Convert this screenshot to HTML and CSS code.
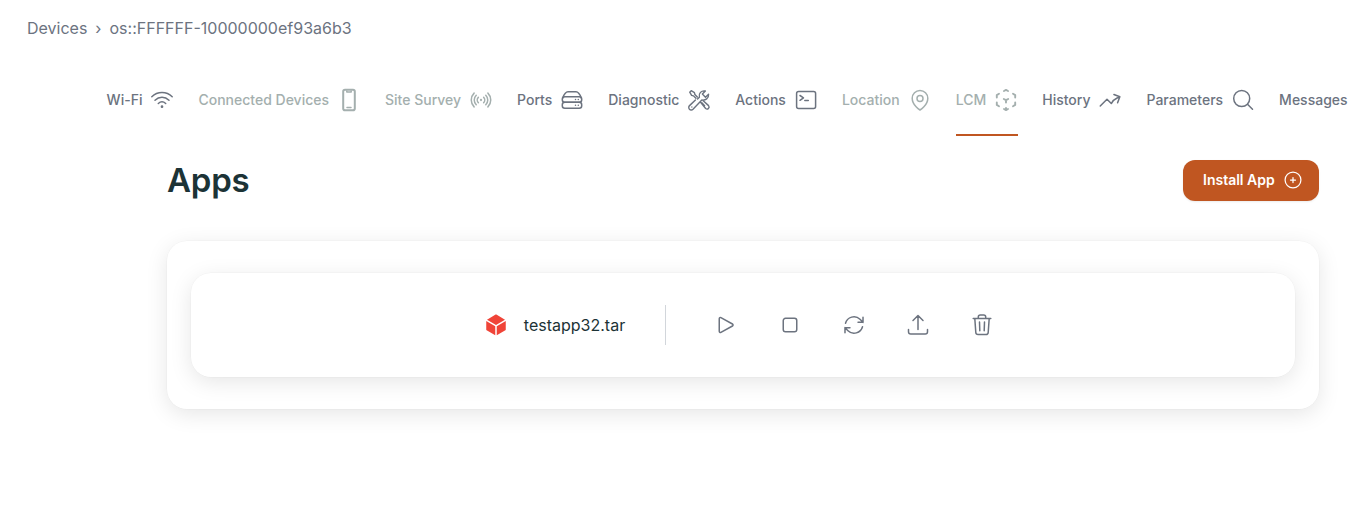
FILE: index.html
```html
<!DOCTYPE html>
<html lang="en">
<head>
<meta charset="utf-8">
<title>Apps</title>
<link rel="stylesheet" href="styles.css">
</head>
<body>
<nav class="breadcrumbs"><span>Devices</span><span class="separator">›</span><span>os::FFFFFF-10000000ef93a6b3</span></nav>
<nav class="tabs">
  <a class="tab">Wi-Fi<svg class="icon" viewBox="0 0 24 24"><path d="M1.8 8.8C7.5 3.2 16.500 3.200 22.200 8.800M5 12.200c4-3.800 10-3.800 14 0M8.300 15.500c2.200-2 5.200-2 7.400 0"/><circle cx="12" cy="18.700" r=".6" class="solid"/></svg></a>
  <a class="tab disabled">Connected Devices<svg class="icon" viewBox="0 0 24 24"><rect x="6.200" y="1.800" width="11.600" height="20.400" rx="1.800" stroke-width="2"/><path d="M9.800 3v1h4.400V3M10 19.500h4"/></svg></a>
  <a class="tab disabled">Site Survey<svg class="icon" viewBox="0 0 24 24"><path d="M9.348 14.651a3.750 3.750 0 0 1 0-5.303m5.304 0a3.750 3.750 0 0 1 0 5.303m-7.425 2.122a6.750 6.750 0 0 1 0-9.546m9.546 0a6.750 6.750 0 0 1 0 9.546M5.106 18.894c-3.808-3.808-3.808-9.980 0-13.789m13.788 0c3.808 3.808 3.808 9.981 0 13.790"/><circle cx="12" cy="12" r=".4" class="solid"/></svg></a>
  <a class="tab">Ports<svg class="icon" viewBox="0 0 24 24"><rect x="2.300" y="8.700" width="19.400" height="5.500" rx="2.500"/><rect x="2.300" y="14.200" width="19.400" height="6.100" rx="2.500"/><path d="M2.800 9.800C4 6.500 5 3.700 8 3.700h8c3 0 4 2.800 5.200 6.100M15.500 11.500h.01M18.300 11.500h.01M15.500 17.300h.01M18.300 17.300h.01"/></svg></a>
  <a class="tab">Diagnostic<svg class="icon" viewBox="-.8 -.8 25.600 25.600"><path d="m10.200 8.700-2.600-2.600-.5-2-3.400-2-1.600 1.600 2 3.400 2 .5 2.600 2.600M13.700 14.500l5.400 6.600a2.200 2.200 0 0 0 3.100-3.100l-5.700-5.200M8.200 11.900 1.900 18a2.400 2.400 0 0 0 3.700 3.900L15 12c3.800.7 7.500-1.800 7.200-6.200l-3.300 3.200-3.300-3.300 3.200-3.300c-4.300-.8-7.500 2.500-6.400 6.600l-2 2M15 15l3 3M4.400 19.500h.01"/></svg></a>
  <a class="tab">Actions<svg class="icon" viewBox="0 0 24 24"><rect x="2.600" y="3.500" width="19" height="17" rx="2"/><path d="m6 7.500 3.500 2.300L6 12.300M10.800 12.500h3.500"/></svg></a>
  <a class="tab disabled">Location<svg class="icon" viewBox="0 0 24 24"><path d="M15 10.500a3 3 0 1 1-6 0 3 3 0 0 1 6 0Z"/><path d="M19.800 10.200c0 7.200-7.800 11.800-7.800 11.800s-7.800-4.600-7.800-11.800a7.800 7.800 0 0 1 15.600 0Z"/></svg></a>
  <a class="tab disabled active">LCM<svg class="icon bold" viewBox="0 0 24 24"><path d="m10 3 2-1.100L14 3M19 5.800l2.200 1.300v2.400M5 5.800 2.800 7.100v2.400M9.800 11l2.200 1.200 2.200-1.200M12 12.200v2.300M2.800 14.500v2.400L5 18.200M21.200 14.500v2.400L19 18.200M10 21l2 1.100 2-1.100M12 20v2"/></svg></a>
  <a class="tab">History<svg class="icon" viewBox="0 0 24 24"><path d="M2.250 18 9 11.250l4.306 4.306a11.950 11.950 0 0 1 5.814-5.518l2.740-1.220m0 0-5.940-2.281m5.940 2.280-2.280 5.941"/></svg></a>
  <a class="tab">Parameters<svg class="icon" viewBox="0 0 24 24"><circle cx="10.700" cy="10.500" r="8"/><path d="m16.500 16.200 5 5"/></svg></a>
  <a class="tab">Messages</a>
</nav>
<main class="content">
  <header class="heading">
    <h1>Apps</h1>
    <button class="install">Install App<svg class="plus" viewBox="0 0 24 24"><path d="M12 9v6m3-3H9m12.500 0a9.500 9.500 0 1 1-19 0 9.500 9.500 0 0 1 19 0Z"/></svg></button>
  </header>
  <section class="panel">
    <article class="app">
      <svg class="cube" viewBox="0 0 24 24"><path d="M12.378 1.602a.75.75 0 0 0-.756 0L3 6.632l9 5.250 9-5.250-8.622-5.030ZM21.750 7.930l-9 5.250v9l8.628-5.032a.75.75 0 0 0 .372-.648V7.930ZM11.250 22.180v-9l-9-5.250v8.570a.75.75 0 0 0 .372.648l8.628 5.033Z"/></svg>
      <span class="name">testapp32.tar</span>
      <div class="actions">
        <svg class="icon" viewBox="0 0 24 24"><path d="M5.250 5.653c0-.856.917-1.398 1.667-.986l11.540 6.347a1.125 1.125 0 0 1 0 1.972l-11.540 6.347a1.125 1.125 0 0 1-1.667-.986V5.653Z"/></svg>
        <svg class="icon" viewBox="0 0 24 24"><path d="M5.250 7.500A2.250 2.250 0 0 1 7.500 5.250h9a2.250 2.250 0 0 1 2.250 2.250v9a2.250 2.250 0 0 1-2.250 2.250h-9a2.250 2.250 0 0 1-2.250-2.250v-9Z"/></svg>
        <svg class="icon" viewBox="0 0 24 24"><path d="M16.023 9.348h4.992V4.356M2.985 19.644v-4.992h4.992M3.500 10.300A8.700 8.700 0 0 1 18 6.300l3 3.048M20.500 13.700A8.700 8.700 0 0 1 6 17.700l-3-3.048"/></svg>
        <svg class="icon" viewBox="0 0 24 24"><path d="M2.500 16.500v2.250A2.250 2.250 0 0 0 4.750 21h14.500a2.250 2.250 0 0 0 2.250-2.250V16.500M7 7.500l5-5 5 5M12 2.500v14"/></svg>
        <svg class="icon" viewBox="0 0 24 24"><path d="M3.200 5.500h17.600M4.800 5.500l1 14a2.250 2.250 0 0 0 2.250 2.100h7.900a2.250 2.250 0 0 0 2.250-2.100l1-14M8.300 5.500V4a2 2 0 0 1 2-2h3.400a2 2 0 0 1 2 2v1.500M9.500 9l.3 8.700M14.500 9l-.3 8.700"/></svg>
      </div>
    </article>
  </section>
</main>
</body>
</html>
```
FILE: styles.css
```css
* { box-sizing: border-box; }
body { margin: 0; min-height: 100vh; background: #fff; color: #6c737f; font-family: Inter, "Liberation Sans", sans-serif; }
.breadcrumbs { display: flex; gap: 8px; padding: 16px 27px 0; height: 64px; font-size: 16px; line-height: 24px; }
.tabs { display: flex; gap: 24px; height: 72px; padding-left: 106.6px; overflow: hidden; font-size: 14px; font-weight: 500; line-height: 24px; white-space: nowrap; }
.tab { display: flex; flex: none; align-items: center; gap: 8px; }
.disabled { color: #a4afae; }
.active { border-bottom: 2px solid #c05621; padding-top: 2px; }
.icon { width: 24px; height: 24px; flex: none; fill: none; stroke: currentColor; stroke-width: 1.5; stroke-linecap: round; stroke-linejoin: round; }
.bold { stroke-width: 1.9; }
.solid { fill: currentColor; }
.content { padding: 24px 36px 0 167px; }
.heading { display: flex; justify-content: space-between; align-items: flex-start; height: 81px; }
h1 { margin: 0; color: #1c3336; font-size: 33px; font-weight: 600; line-height: 41px; letter-spacing: -.2px; }
.install { display: flex; align-items: center; gap: 8px; width: 136px; height: 41px; padding: 0 16px 1px 20px; border: 0; border-radius: 12px; background: #c05621; color: #fff; font: 600 14px/24px Inter, sans-serif; white-space: nowrap; box-shadow: 0 1px 2px rgba(0,0,0,.08); }
.plus { width: 20px; height: 20px; flex: none; fill: none; stroke: currentColor; stroke-width: 1.5; stroke-linecap: round; }
.panel, .app { border-radius: 20px; background: #fff; box-shadow: 0 5px 22px rgba(0,0,0,.1), 0 0 0 .5px rgba(0,0,0,.03); }
.panel { padding: 32px 24px; height: 168px; }
.app { display: flex; align-items: center; justify-content: center; height: 104px; padding-right: 8px; }
.cube { width: 24px; height: 24px; fill: #f04438; }
.name { margin: 0 40px 0 16px; color: #1c3336; font-size: 16px; line-height: 24px; }
.actions { display: flex; align-items: center; gap: 40px; height: 40px; padding-left: 48px; border-left: 1px solid #d2d6db; }
```
